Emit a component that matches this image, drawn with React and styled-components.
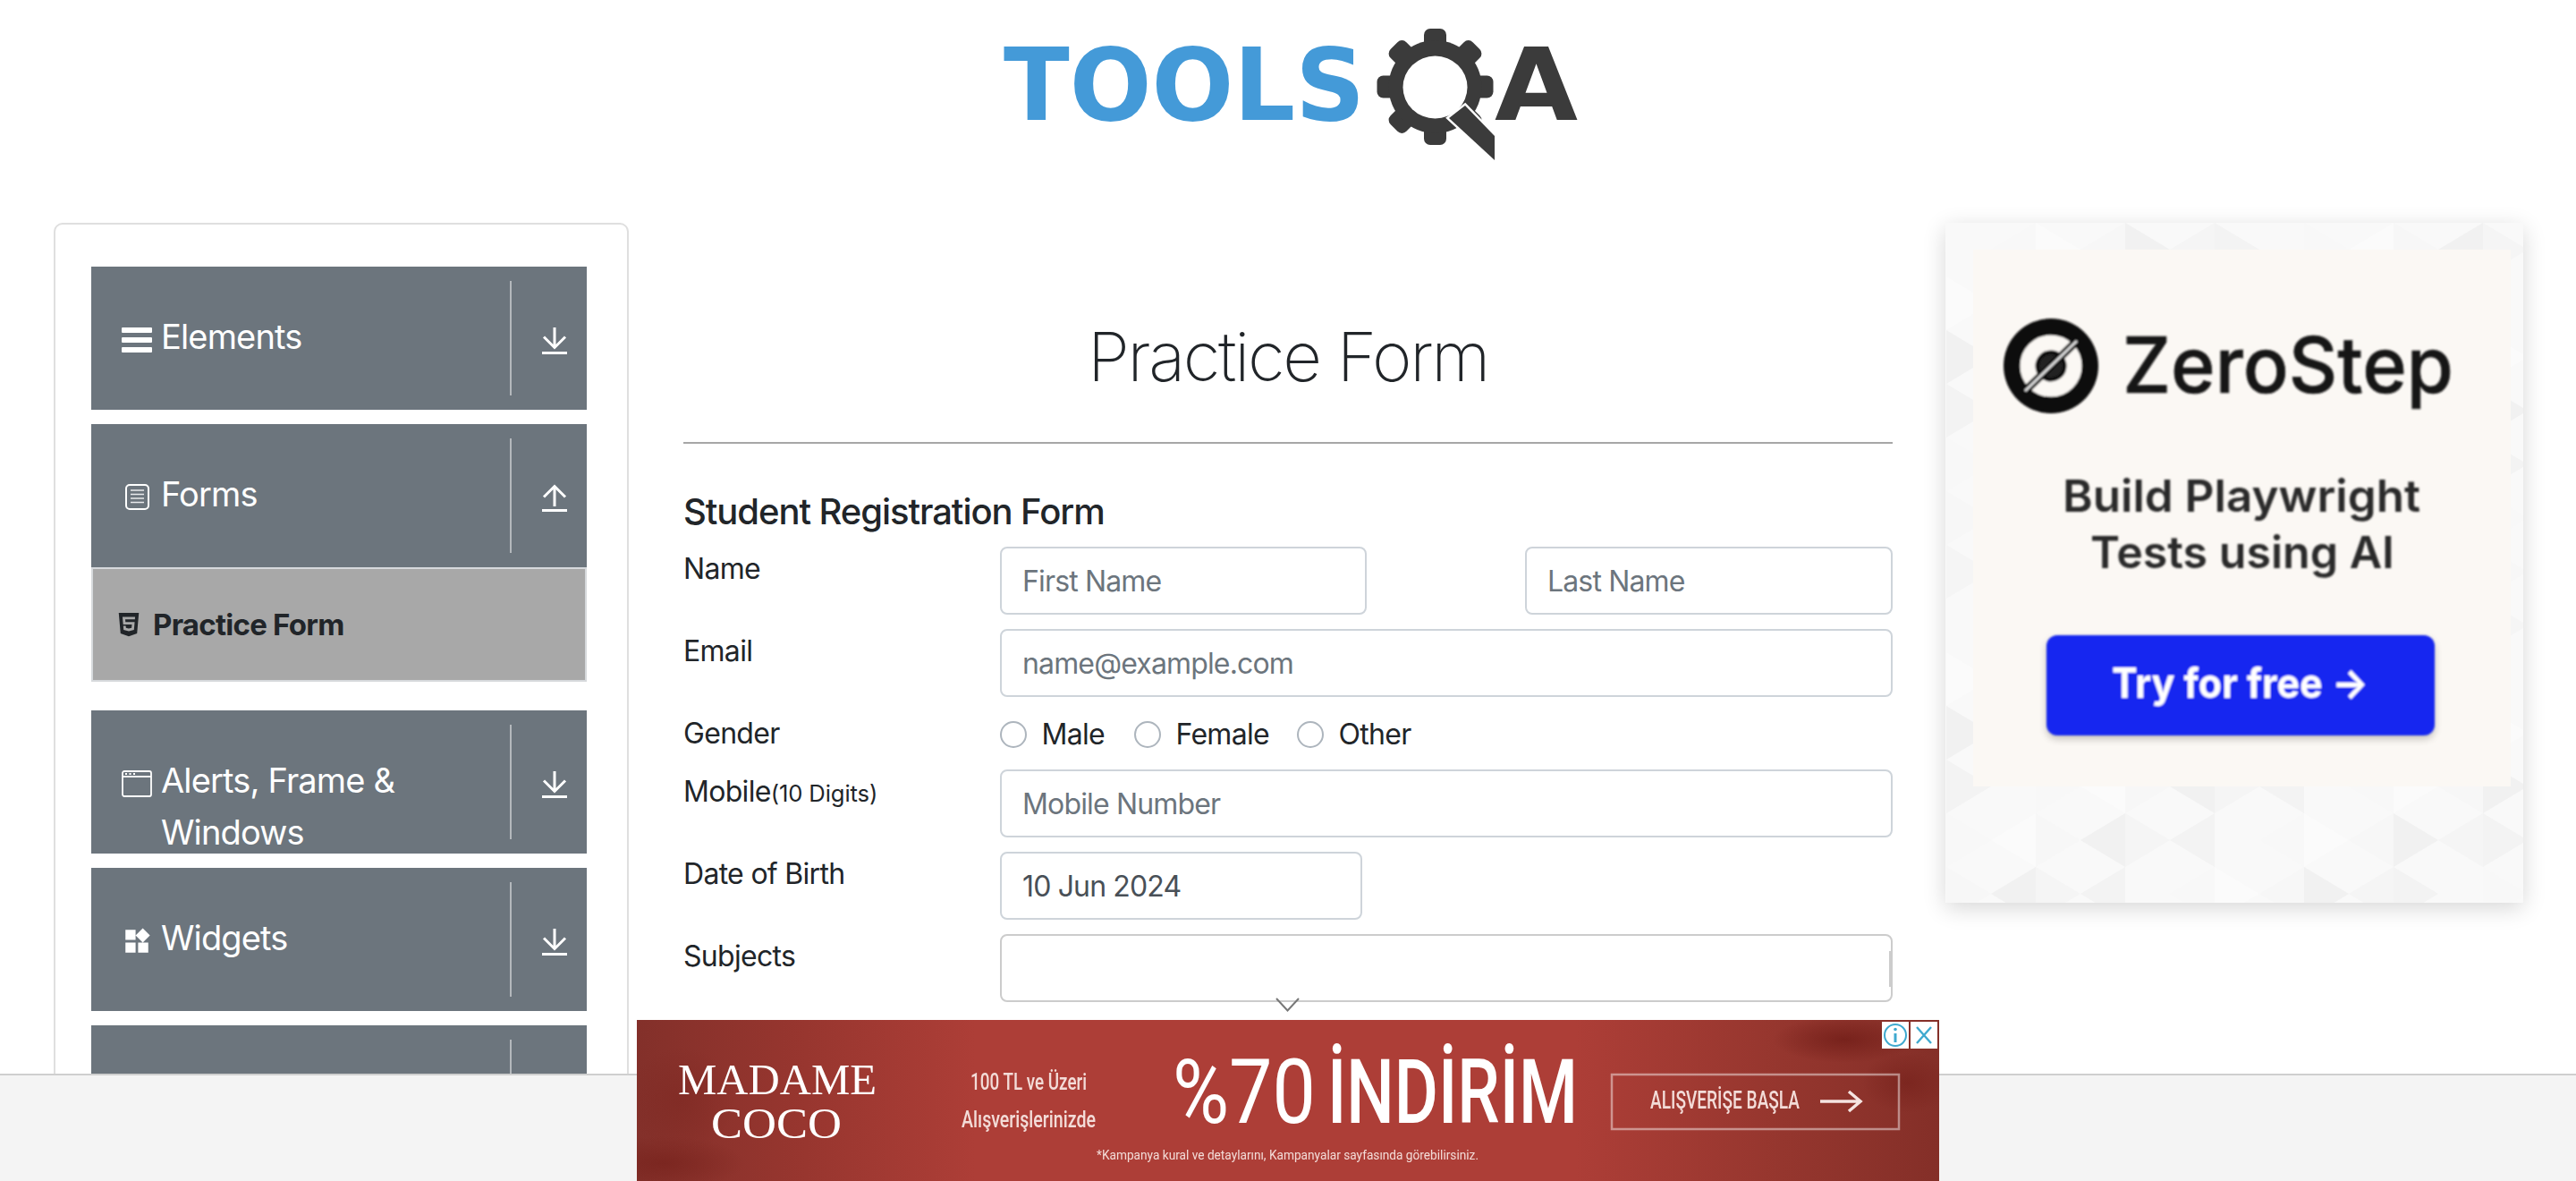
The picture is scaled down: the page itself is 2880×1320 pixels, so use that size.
import React from 'react';
import styled, { createGlobalStyle } from 'styled-components';
import { FaHtml5 } from 'react-icons/fa';
import { MdWidgets } from 'react-icons/md';

const Global = createGlobalStyle`
  html, body { margin: 0; padding: 0; background: #fff; }
  body { font-family: Inter, "Noto Sans", sans-serif; color: #212529; }
  * { box-sizing: border-box; }
`;

const Page = styled.div`
  position: relative;
  width: 2880px;
  height: 1320px;
  overflow: hidden;
`;

const Header = styled.header`
  height: 249px;
  display: flex;
  justify-content: center;
`;

const LogoSvg = styled.svg`
  width: 700px;
  height: 200px;
  display: block;
`;

const Columns = styled.div`
  display: flex;
  align-items: flex-start;
  padding-left: 60px;
`;

const SideCard = styled.aside`
  width: 643px;
  flex: none;
  border: 2px solid #dfdfdf;
  border-radius: 10px;
  padding: 47px 45px 40px 40px;
  display: flex;
  flex-direction: column;
`;

const Group = styled.div`
  margin-bottom: ${p => (p.$open ? '32px' : '16px')};
`;

const GroupHeader = styled.div`
  height: 160px;
  overflow: hidden;
  background: #6c757d;
  color: #fff;
  display: flex;
  align-items: flex-start;
  position: relative;
`;

const HeaderLabel = styled.div`
  width: 468px;
  padding: 50px 8px 0 34px;
  display: flex;
  align-items: flex-start;
  font-size: 38px;
  line-height: 57.6px;
  letter-spacing: -0.85px;
  flex: none;
`;

const IconSlot = styled.span`
  width: 34px;
  height: 57.6px;
  margin-right: 10px;
  flex: none;
  display: flex;
  align-items: center;
  justify-content: center;
  position: relative;
  top: 3px;
  svg { display: block; }
`;

const Divider = styled.span`
  width: 2px;
  height: 128px;
  margin-top: 16px;
  background: #b4b8bc;
  flex: none;
`;

const ArrowSlot = styled.span`
  flex: 1;
  height: 160px;
  display: flex;
  justify-content: center;
  padding-top: 67px;
  padding-left: 11px;
  svg { display: block; }
`;

const SubItem = styled.div`
  height: 128px;
  background: #a8a8a8;
  border: 2px solid #d6d9dc;
  padding: 0 0 0 25px;
  display: flex;
  align-items: center;
  font-size: 33px;
  font-weight: 700;
  letter-spacing: -0.75px;
  color: #212529;
  gap: 12px;
  svg { display: block; }
`;

const Main = styled.main`
  width: 1352px;
  margin-left: 61px;
  flex: none;
`;

const Title = styled.h1`
  margin: 0;
  padding-top: 101px;
  height: 247px;
  text-align: center;
  font-size: 76px;
  line-height: 96px;
  font-weight: 200;
  letter-spacing: -2.3px;
  color: #212529;
  border-bottom: 2px solid #a6a6a6;
`;

const SectionTitle = styled.h5`
  margin: 0;
  padding-top: 52px;
  height: 115px;
  font-size: 40px;
  line-height: 48px;
  font-weight: 500;
  letter-spacing: -1.07px;
  color: #212529;
`;

const Row = styled.div`
  display: grid;
  grid-template-columns: 354px 1fr;
  margin-bottom: 16px;
`;

const Label = styled.label`
  font-size: 32px;
  line-height: 48px;
  letter-spacing: -0.7px;
  padding-top: 1px;
`;

const Small = styled.small`
  font-size: 25.6px;
  letter-spacing: -0.1px;
`;

const Fields = styled.div`
  display: flex;
  justify-content: space-between;
`;

const Input = styled.div`
  width: ${p => p.$w || '100%'};
  height: 76px;
  border: 2px solid ${p => (p.$dark ? '#cccccc' : '#ced4da')};
  border-radius: 8px;
  padding: 0 23px;
  display: flex;
  align-items: center;
  font-size: 32px;
  letter-spacing: -0.85px;
  color: ${p => (p.$value ? '#495057' : '#6c757d')};
  position: relative;
`;

const SubjectMark = styled.span`
  position: absolute;
  right: 0;
  top: 17px;
  width: 2px;
  height: 40px;
  background: #cccccc;
`;

const RadioRow = styled.div`
  display: flex;
  align-items: center;
  height: 48px;
  padding-top: 3px;
`;

const Radio = styled.span`
  width: 30px;
  height: 30px;
  border: 2px solid #adb5bd;
  border-radius: 50%;
  background: #fff;
  flex: none;
  margin-right: 16.5px;
`;

const RadioText = styled.span`
  font-size: 32px;
  line-height: 48px;
  letter-spacing: -0.7px;
  margin-right: ${p => p.$mr}px;
`;

const AdCard = styled.div`
  margin-left: 59px;
  width: 646px;
  height: 760px;
  flex: none;
  box-shadow: 0 6px 24px rgba(0, 0, 0, 0.16);
  svg { display: block; }
`;

const Footer = styled.footer`
  position: absolute;
  left: 0;
  right: 0;
  bottom: 0;
  height: 120px;
  background: #f4f4f4;
  border-top: 2px solid #cfcfcf;
`;

const BannerWrap = styled.div`
  position: absolute;
  left: 712px;
  bottom: 0;
  width: 1456px;
  height: 180px;
  svg { display: block; }
`;

const AdBadge = styled.span`
  position: absolute;
  top: 2px;
  right: ${p => p.$right}px;
  width: 30px;
  height: 30px;
  background: #fff;
  display: flex;
  align-items: center;
  justify-content: center;
`;

const Chevron = styled.svg`
  position: absolute;
  left: 1426px;
  top: 1115px;
  width: 27px;
  height: 16px;
`;

const DownArrow = () => (
  <svg width="30" height="32" viewBox="0 0 30 32" fill="none" stroke="#fff" strokeWidth="3">
    <path d="M15 1V23M3 11.5L15 23.5L27 11.5" />
    <path d="M1 29.5H29" />
  </svg>
);

const UpArrow = () => (
  <svg width="30" height="32" viewBox="0 0 30 32" fill="none" stroke="#fff" strokeWidth="3">
    <path d="M15 25V3M3 14.5L15 2.5L27 14.5" />
    <path d="M1 29.5H29" />
  </svg>
);

const BarsIcon = () => (
  <svg width="34" height="30" viewBox="0 0 34 30" fill="#fff">
    <rect x="0" y="1" width="34" height="6" rx="1" />
    <rect x="0" y="12" width="34" height="6" rx="1" />
    <rect x="0" y="23" width="34" height="6" rx="1" />
  </svg>
);

const DocIcon = () => (
  <svg width="27" height="29" viewBox="0 0 27 29" fill="none" stroke="#fff">
    <rect x="1" y="1" width="25" height="27" rx="4" strokeWidth="2" />
    <path d="M6 7H21M6 11.5H21M6 16H21M6 20.5H21" strokeWidth="1.6" opacity=".85" />
  </svg>
);

const WindowIcon = () => (
  <svg width="34" height="30" viewBox="0 0 34 30" fill="none" stroke="#fff">
    <rect x="1" y="1" width="32" height="28" rx="2" strokeWidth="1.8" />
    <path d="M1 7H33" strokeWidth="1.8" />
    <path d="M4 4H6M8.5 4H10.5M13 4H15" strokeWidth="2" />
  </svg>
);

const Logo = () => {
  const teeth = [0, 45, 90, 135, 180, 225, 270, 315];
  return (
    <LogoSvg viewBox="0 0 700 200">
      <text x="32" y="134" fontFamily="'DejaVu Sans'" fontWeight="700" fontSize="112" fill="#449ad8" textLength="404" lengthAdjust="spacingAndGlyphs">TOOLS</text>
      <g fill="#3b3b3b">
        {teeth.map(a => (
          <rect key={a} x="502" y="32" width="25" height="26" rx="7" transform={`rotate(${a} 514.5 97)`} />
        ))}
        <circle cx="514.5" cy="97" r="52" />
      </g>
      <ellipse cx="514.5" cy="97.5" rx="36" ry="35" fill="#fff" />
      <path d="M530 132L548 118L581 152V179Z" fill="#3b3b3b" stroke="#fff" strokeWidth="5" paintOrder="stroke" />
      <text x="581" y="134" fontFamily="'DejaVu Sans'" fontWeight="700" fontSize="112" fill="#3b3b3b" textLength="93" lengthAdjust="spacingAndGlyphs">A</text>
    </LogoSvg>
  );
};

const shades = ['#f9f9f9', '#f7f7f7', '#f3f3f3', '#fbfbfb', '#f5f5f5', '#f8f8f8', '#f1f1f1'];

const triangles = (() => {
  const out = [];
  const w = 50;
  const h = 60;
  for (let c = 0; c < 14; c++) {
    for (let r = -1; r < 14; r++) {
      const x = c * w;
      const flip = c % 2 === 0;
      const y = r * h + (flip ? 0 : h / 2);
      const d = flip
        ? `M${x} ${y}L${x + w} ${y + h / 2}L${x} ${y + h}Z`
        : `M${x + w} ${y - h / 2}L${x} ${y}L${x + w} ${y + h / 2}Z`;
      out.push({ d, fill: shades[(c * 5 + r * 3 + 7) % shades.length] });
    }
  }
  return out;
})();

const ZeroStepAd = () => (
  <svg width="646" height="760" viewBox="-1 0 646 760">
    <defs>
      <filter id="soft"><feGaussianBlur stdDeviation="0.9" /></filter>
      <filter id="btnShadow" x="-10%" y="-20%" width="120%" height="150%"><feGaussianBlur stdDeviation="4" /></filter>
    </defs>
    <rect x="-1" width="646" height="760" fill="#f9f9f9" />
    {triangles.map((t, i) => <path key={i} d={t.d} fill={t.fill} />)}
    <rect x="30" y="30" width="601" height="600" fill="#fbf8f4" />
    <rect x="112" y="465" width="434" height="112" rx="12" fill="#000" opacity=".22" filter="url(#btnShadow)" />
    <g filter="url(#soft)">
      <circle cx="117" cy="160" r="53" fill="#111" />
      <circle cx="117" cy="160" r="26" fill="none" stroke="#fbf8f4" strokeWidth="17" />
      <circle cx="117" cy="160" r="13" fill="#222" />
      <path d="M88 188L146 132" stroke="#111" strokeWidth="9" />
      <path d="M88 188L146 132" stroke="#ddd" strokeWidth="3" />
      <text x="197" y="190" fontFamily="Inter" fontWeight="500" fontSize="87" fill="#181818" stroke="#181818" strokeWidth=".7" textLength="370" lengthAdjust="spacingAndGlyphs">ZeroStep</text>
      <text x="130" y="323" fontFamily="Inter" fontWeight="600" fontSize="50" fill="#2a2a2a" textLength="400" lengthAdjust="spacingAndGlyphs">Build Playwright</text>
      <text x="161" y="386" fontFamily="Inter" fontWeight="600" fontSize="50" fill="#2a2a2a" textLength="340" lengthAdjust="spacingAndGlyphs">Tests using AI</text>
      <rect x="112" y="461" width="434" height="112" rx="12" fill="#1428f0" />
      <text x="185" y="531" fontFamily="Inter" fontWeight="700" fontSize="46" fill="#fff" textLength="287" lengthAdjust="spacingAndGlyphs">Try for free →</text>
    </g>
  </svg>
);

const Banner = () => (
  <svg width="1456" height="180" viewBox="0 0 1456 180">
    <defs>
      <linearGradient id="bg" x1="0" x2="1" y1="0" y2="0">
        <stop offset="0" stopColor="#83302a" />
        <stop offset="0.13" stopColor="#98362f" />
        <stop offset="0.26" stopColor="#ad3e37" />
        <stop offset="0.72" stopColor="#ad3e37" />
        <stop offset="0.88" stopColor="#95362e" />
        <stop offset="1" stopColor="#842f28" />
      </linearGradient>
      <radialGradient id="leaf" cx="0.5" cy="0.5" r="0.5">
        <stop offset="0" stopColor="#75201a" stopOpacity=".9" />
        <stop offset="1" stopColor="#75201a" stopOpacity="0" />
      </radialGradient>
      <filter id="adsoft"><feGaussianBlur stdDeviation="0.6" /></filter>
    </defs>
    <rect width="1456" height="180" fill="url(#bg)" />
    <ellipse cx="30" cy="160" rx="90" ry="30" fill="url(#leaf)" opacity=".7" />
    <ellipse cx="50" cy="90" rx="60" ry="60" fill="url(#leaf)" opacity=".35" />
    <ellipse cx="1350" cy="22" rx="80" ry="26" fill="url(#leaf)" />
    <ellipse cx="1420" cy="70" rx="50" ry="34" fill="url(#leaf)" opacity=".7" />
    <g fill="#fff" filter="url(#adsoft)">
      <text x="46" y="83" fontFamily="'Liberation Serif'" fontSize="48" textLength="222" lengthAdjust="spacingAndGlyphs">MADAME</text>
      <text x="83" y="132" fontFamily="'Liberation Serif'" fontSize="48" textLength="146" lengthAdjust="spacingAndGlyphs">COCO</text>
      <g fill="#f3dcd8">
        <text x="373" y="78" fontFamily="Roboto" fontWeight="500" fontSize="25" textLength="130" lengthAdjust="spacingAndGlyphs">100 TL ve Üzeri</text>
        <text x="363" y="120" fontFamily="Roboto" fontWeight="500" fontSize="25" textLength="150" lengthAdjust="spacingAndGlyphs">Alışverişlerinizde</text>
        <text x="514" y="156" fontFamily="Roboto" fontSize="14" textLength="427" lengthAdjust="spacingAndGlyphs">*Kampanya kural ve detaylarını, Kampanyalar sayfasında görebilirsiniz.</text>
        <text x="1133" y="99" fontFamily="Roboto" fontWeight="500" fontSize="28" textLength="167" lengthAdjust="spacingAndGlyphs">ALIŞVERİŞE BAŞLA</text>
      </g>
      <text x="599" y="115" fontFamily="Roboto" fontWeight="400" fontSize="100" textLength="160" lengthAdjust="spacingAndGlyphs">%70</text>
      <text x="772" y="115" fontFamily="Roboto" fontWeight="500" fontSize="100" textLength="280" lengthAdjust="spacingAndGlyphs">İNDİRİM</text>
    </g>
    <rect x="1090" y="61" width="321" height="61" fill="none" stroke="#fff" strokeOpacity=".45" strokeWidth="2.5" />
    <path d="M1323 91H1367M1355 80L1368 91L1355 102" fill="none" stroke="#f5e4e1" strokeWidth="3.5" />
  </svg>
);

const App = () => (
  <Page>
    <Global />
    <Header><Logo /></Header>
    <Columns>
      <SideCard>
        <Group>
          <GroupHeader>
            <HeaderLabel><IconSlot><BarsIcon /></IconSlot>Elements</HeaderLabel>
            <Divider />
            <ArrowSlot><DownArrow /></ArrowSlot>
          </GroupHeader>
        </Group>
        <Group $open>
          <GroupHeader>
            <HeaderLabel><IconSlot><DocIcon /></IconSlot>Forms</HeaderLabel>
            <Divider />
            <ArrowSlot><UpArrow /></ArrowSlot>
          </GroupHeader>
          <SubItem><FaHtml5 size={30} />Practice Form</SubItem>
        </Group>
        <Group>
          <GroupHeader>
            <HeaderLabel><IconSlot><WindowIcon /></IconSlot>Alerts, Frame &amp; Windows</HeaderLabel>
            <Divider />
            <ArrowSlot><DownArrow /></ArrowSlot>
          </GroupHeader>
        </Group>
        <Group>
          <GroupHeader>
            <HeaderLabel><IconSlot><MdWidgets size={36} /></IconSlot>Widgets</HeaderLabel>
            <Divider />
            <ArrowSlot><DownArrow /></ArrowSlot>
          </GroupHeader>
        </Group>
        <Group>
          <GroupHeader>
            <HeaderLabel />
            <Divider />
            <ArrowSlot />
          </GroupHeader>
        </Group>
      </SideCard>
      <Main>
        <Title>Practice Form</Title>
        <SectionTitle>Student Registration Form</SectionTitle>
        <Row>
          <Label>Name</Label>
          <Fields>
            <Input $w="410px">First Name</Input>
            <Input $w="411px">Last Name</Input>
          </Fields>
        </Row>
        <Row>
          <Label>Email</Label>
          <Input>name@example.com</Input>
        </Row>
        <Row>
          <Label>Gender</Label>
          <RadioRow>
            <Radio /><RadioText $mr={33}>Male</RadioText>
            <Radio /><RadioText $mr={31}>Female</RadioText>
            <Radio /><RadioText $mr={0}>Other</RadioText>
          </RadioRow>
        </Row>
        <Row>
          <Label>Mobile<Small>(10 Digits)</Small></Label>
          <Input>Mobile Number</Input>
        </Row>
        <Row>
          <Label>Date of Birth</Label>
          <Input $w="405px" $value>10 Jun 2024</Input>
        </Row>
        <Row>
          <Label>Subjects</Label>
          <Input $dark><SubjectMark /></Input>
        </Row>
      </Main>
      <AdCard><ZeroStepAd /></AdCard>
    </Columns>
    <Chevron viewBox="0 0 27 16"><path d="M1 1L13.5 14.5L26 1" fill="none" stroke="#777" strokeWidth="2" /></Chevron>
    <Footer />
    <BannerWrap>
      <Banner />
      <AdBadge $right={34}>
        <svg width="28" height="28" viewBox="0 0 28 28" fill="none" stroke="#3fa9cf" strokeWidth="2">
          <circle cx="14" cy="14" r="12" />
          <path d="M14 12V22" strokeWidth="3" />
          <circle cx="14" cy="7.5" r="1.8" fill="#3fa9cf" stroke="none" />
        </svg>
      </AdBadge>
      <AdBadge $right={2}>
        <svg width="24" height="24" viewBox="0 0 24 24" fill="none" stroke="#3fa9cf" strokeWidth="2.4">
          <path d="M4 3L20 21M20 3L4 21" />
        </svg>
      </AdBadge>
    </BannerWrap>
  </Page>
);

export default App;
